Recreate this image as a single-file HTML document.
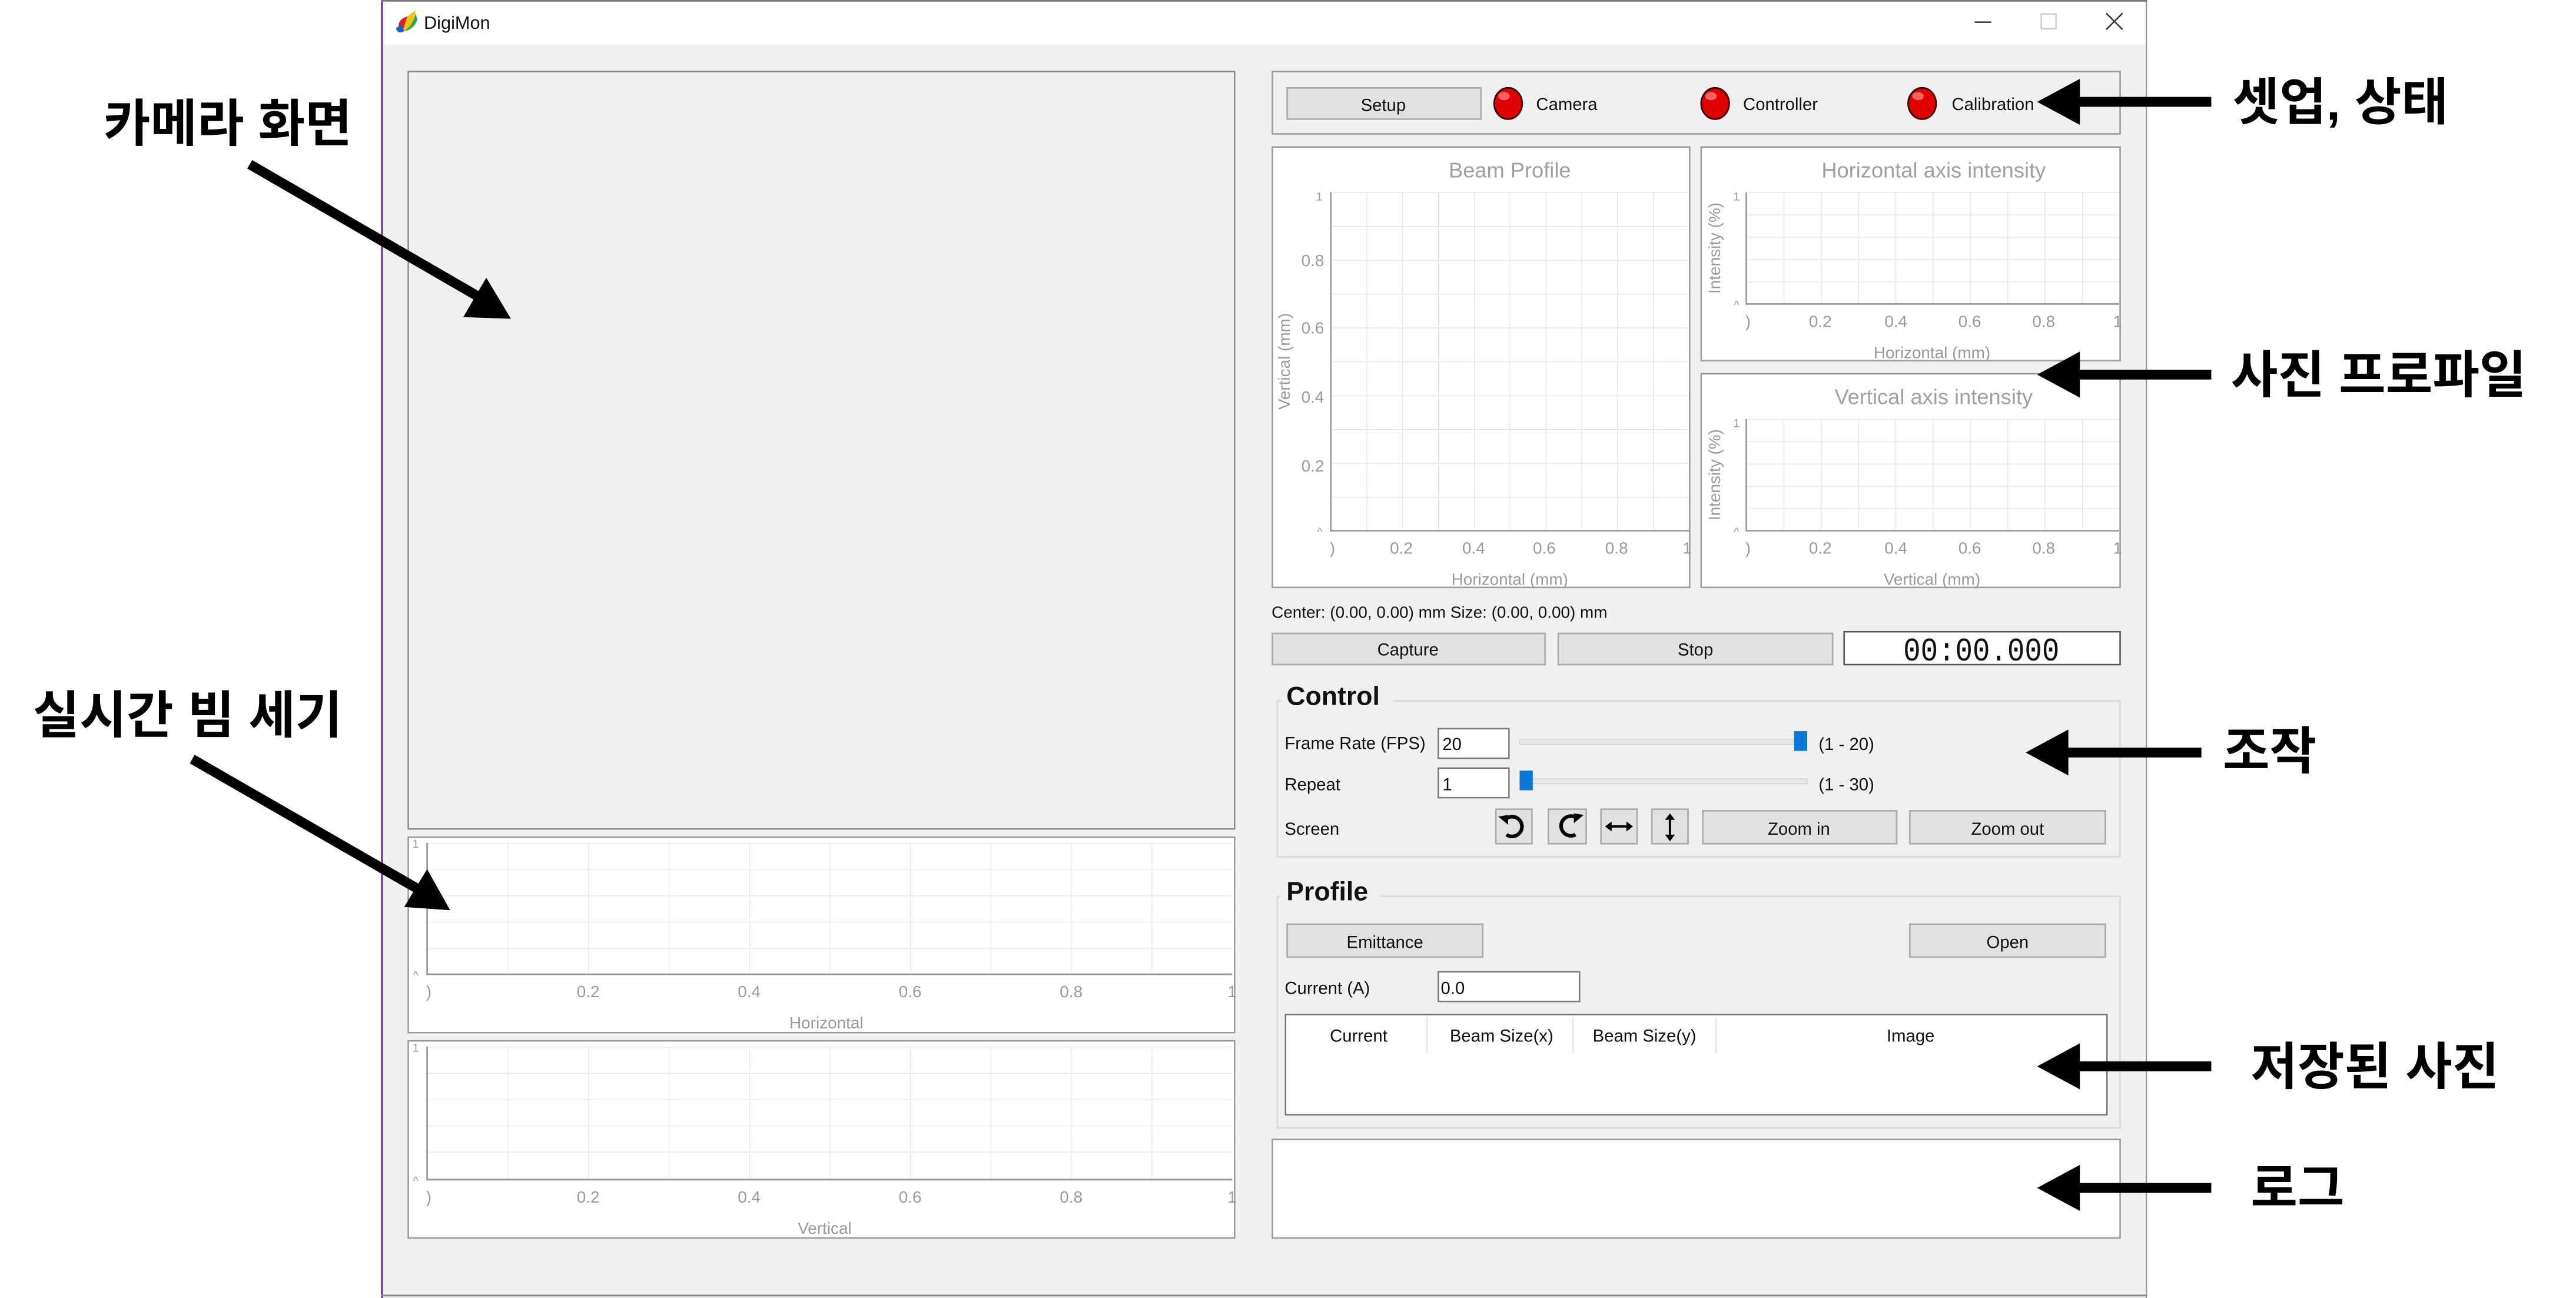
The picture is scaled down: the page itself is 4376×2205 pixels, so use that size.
<!DOCTYPE html>
<html><head><meta charset="utf-8"><style>
html,body{margin:0;padding:0;background:#fff;width:4376px;height:2205px;overflow:hidden}
svg{display:block}
text{font-family:"Liberation Sans","Noto Sans CJK KR",sans-serif}
.k{font-family:"Liberation Sans","Noto Sans CJK KR",sans-serif;font-weight:bold;font-size:31px;fill:#000}
.t{font-size:10.5px;fill:#111}
.g{font-size:10px;fill:#9a9a9a}
.gt{font-size:13px;fill:#a0a0a0}
.btn{fill:#e1e1e1;stroke:#adadad;stroke-width:1}
</style></head><body>
<svg width="4376" height="2205" viewBox="0 0 1568 790" preserveAspectRatio="none" xmlns="http://www.w3.org/2000/svg">
<defs>
<pattern id="gBP" patternUnits="userSpaceOnUse" x="810" y="117" width="21.8" height="20.6"><path d="M0 0V20.6M0 0H21.8" stroke="#e2e2e2" stroke-width="0.8" fill="none"/></pattern>
<pattern id="gHI" patternUnits="userSpaceOnUse" x="1063" y="117" width="22.7" height="13.6"><path d="M0 0V13.6M0 0H22.7" stroke="#e2e2e2" stroke-width="0.8" fill="none"/></pattern>
<pattern id="gVI" patternUnits="userSpaceOnUse" x="1063" y="255" width="22.7" height="13.6"><path d="M0 0V13.6M0 0H22.7" stroke="#e2e2e2" stroke-width="0.8" fill="none"/></pattern>
<pattern id="gL1" patternUnits="userSpaceOnUse" x="260" y="513" width="49" height="16"><path d="M0 0V16M0 0H49" stroke="#e4e4e4" stroke-width="0.8" fill="none"/></pattern>
<pattern id="gL2" patternUnits="userSpaceOnUse" x="260" y="637" width="49" height="16"><path d="M0 0V16M0 0H49" stroke="#e4e4e4" stroke-width="0.8" fill="none"/></pattern>
</defs>
<rect width="1568" height="790" fill="#fff"/>
<!-- window -->
<rect x="232" y="0" width="1075" height="790" fill="#f0f0f0"/>
<rect x="232" y="0" width="1075" height="27" fill="#fff"/>
<line x1="232.5" y1="0" x2="232.5" y2="790" stroke="#6a3a9a" stroke-width="1.2"/>
<line x1="1306.5" y1="0" x2="1306.5" y2="790" stroke="#999" stroke-width="0.8"/>
<line x1="232" y1="0.5" x2="1307" y2="0.5" stroke="#777" stroke-width="1"/>
<line x1="232" y1="788.5" x2="1307" y2="788.5" stroke="#888" stroke-width="1"/>
<!-- logo -->
<path d="M243 19 Q241 12 248 10 L245 19 Z" fill="#e02020"/>
<path d="M245 19 L248 10 Q252 7 253 6 Q252 14 247 19 Z" fill="#f4c20d"/>
<path d="M241 17 Q242 21 246 19 L245 15 Z" fill="#1a5fd0"/>
<path d="M246 19 Q251 16 253 8 L254 12 Q252 18 246 19Z" fill="#2aa84a"/>
<text x="258" y="17.5" style="font-size:11px;fill:#111">DigiMon</text>
<line x1="1202" y1="13.5" x2="1212" y2="13.5" stroke="#333" stroke-width="0.9"/>
<rect x="1242.5" y="8.5" width="9" height="9" fill="none" stroke="#ccc" stroke-width="0.9"/>
<path d="M1282 8L1292 18M1292 8L1282 18" stroke="#333" stroke-width="0.9"/>
<!-- camera frame -->
<rect x="248.5" y="43.5" width="503" height="461" fill="#f0f0f0" stroke="#8a8a8a" stroke-width="0.9"/>
<!-- left charts -->
<rect x="248.5" y="509.5" width="503" height="119" fill="#fff" stroke="#999" stroke-width="0.9"/>
<rect x="260" y="513" width="490" height="80" fill="url(#gL1)"/>
<path d="M260 513V593H750" stroke="#999" stroke-width="1" fill="none"/>
<g class="g" text-anchor="middle"><text x="358" y="607">0.2</text><text x="456" y="607">0.4</text><text x="554" y="607">0.6</text><text x="652" y="607">0.8</text><text x="261" y="607">)</text><text x="750" y="607">1</text><text x="503" y="626">Horizontal</text><text x="253" y="516" style="font-size:7px">1</text><text x="253" y="596" style="font-size:7px">^</text></g>
<rect x="248.5" y="633.5" width="503" height="120" fill="#fff" stroke="#999" stroke-width="0.9"/>
<rect x="260" y="637" width="490" height="81" fill="url(#gL2)"/>
<path d="M260 637V718H750" stroke="#999" stroke-width="1" fill="none"/>
<g class="g" text-anchor="middle"><text x="358" y="732">0.2</text><text x="456" y="732">0.4</text><text x="554" y="732">0.6</text><text x="652" y="732">0.8</text><text x="261" y="732">)</text><text x="750" y="732">1</text><text x="502" y="751">Vertical</text><text x="253" y="640" style="font-size:7px">1</text><text x="253" y="721" style="font-size:7px">^</text></g>
<!-- status box -->
<rect x="774.5" y="43.5" width="516" height="38" fill="#f0f0f0" stroke="#999" stroke-width="0.9"/>
<rect x="783.5" y="53.5" width="118" height="19" class="btn"/>
<text x="842" y="67.5" class="t" text-anchor="middle">Setup</text>
<g><ellipse cx="918" cy="63" rx="8.5" ry="9.5" fill="#e00000" stroke="#300" stroke-width="1"/><ellipse cx="915.5" cy="58.5" rx="3.5" ry="2.5" fill="#ff8a8a" opacity=".7"/></g>
<g><ellipse cx="1044" cy="63" rx="8.5" ry="9.5" fill="#e00000" stroke="#300" stroke-width="1"/><ellipse cx="1041.5" cy="58.5" rx="3.5" ry="2.5" fill="#ff8a8a" opacity=".7"/></g>
<g><ellipse cx="1170" cy="63" rx="8.5" ry="9.5" fill="#e00000" stroke="#300" stroke-width="1"/><ellipse cx="1167.5" cy="58.5" rx="3.5" ry="2.5" fill="#ff8a8a" opacity=".7"/></g>
<text x="935" y="67" class="t">Camera</text>
<text x="1061" y="67" class="t">Controller</text>
<text x="1188" y="67" class="t">Calibration</text>
<!-- beam profile -->
<rect x="774.5" y="89.5" width="254" height="268" fill="#fff" stroke="#999" stroke-width="0.9"/>
<text x="919" y="108" class="gt" text-anchor="middle">Beam Profile</text>
<rect x="810" y="117" width="218" height="206" fill="url(#gBP)"/>
<path d="M810 117V323H1028" stroke="#999" stroke-width="1" fill="none"/>
<g class="g" text-anchor="middle"><text x="853" y="337">0.2</text><text x="897" y="337">0.4</text><text x="940" y="337">0.6</text><text x="984" y="337">0.8</text><text x="811" y="337">)</text><text x="1027" y="337">1</text><text x="919" y="356">Horizontal (mm)</text></g>
<g class="g" text-anchor="end"><text x="806" y="162">0.8</text><text x="806" y="203">0.6</text><text x="806" y="245">0.4</text><text x="806" y="287">0.2</text><text x="805" y="326" style="font-size:7px">^</text><text x="805" y="122" style="font-size:7px">1</text></g>
<text transform="translate(785,220) rotate(-90)" class="g" text-anchor="middle">Vertical (mm)</text>
<!-- horiz intensity -->
<rect x="1035.5" y="89.5" width="255" height="130" fill="#fff" stroke="#999" stroke-width="0.9"/>
<text x="1177" y="108" class="gt" text-anchor="middle">Horizontal axis intensity</text>
<rect x="1063" y="117" width="227" height="68" fill="url(#gHI)"/>
<path d="M1063 117V185H1290" stroke="#999" stroke-width="1" fill="none"/>
<g class="g" text-anchor="middle"><text x="1108" y="199">0.2</text><text x="1154" y="199">0.4</text><text x="1199" y="199">0.6</text><text x="1244" y="199">0.8</text><text x="1064" y="199">)</text><text x="1289" y="199">1</text><text x="1176" y="218">Horizontal (mm)</text><text x="1057" y="122" style="font-size:7px">1</text><text x="1057" y="188" style="font-size:7px">^</text></g>
<text transform="translate(1047,151) rotate(-90)" class="g" text-anchor="middle">Intensity (%)</text>
<!-- vert intensity -->
<rect x="1035.5" y="227.5" width="255" height="130" fill="#fff" stroke="#999" stroke-width="0.9"/>
<text x="1177" y="246" class="gt" text-anchor="middle">Vertical axis intensity</text>
<rect x="1063" y="255" width="227" height="68" fill="url(#gVI)"/>
<path d="M1063 255V323H1290" stroke="#999" stroke-width="1" fill="none"/>
<g class="g" text-anchor="middle"><text x="1108" y="337">0.2</text><text x="1154" y="337">0.4</text><text x="1199" y="337">0.6</text><text x="1244" y="337">0.8</text><text x="1064" y="337">)</text><text x="1289" y="337">1</text><text x="1176" y="356">Vertical (mm)</text><text x="1057" y="260" style="font-size:7px">1</text><text x="1057" y="326" style="font-size:7px">^</text></g>
<text transform="translate(1047,289) rotate(-90)" class="g" text-anchor="middle">Intensity (%)</text>
<text x="774" y="376" style="font-size:10px;fill:#111">Center: (0.00, 0.00) mm Size: (0.00, 0.00) mm</text>
<!-- capture row -->
<rect x="774.5" y="385.5" width="166" height="19" class="btn"/><text x="857" y="399" class="t" text-anchor="middle">Capture</text>
<rect x="948.5" y="385.5" width="167" height="19" class="btn"/><text x="1032" y="399" class="t" text-anchor="middle">Stop</text>
<rect x="1122.5" y="384.5" width="168" height="20" fill="#fff" stroke="#555" stroke-width="0.9"/>
<text x="1206" y="402" text-anchor="middle" style="font-family:'Liberation Mono',monospace;font-size:20px;fill:#111" textLength="95" lengthAdjust="spacingAndGlyphs">00:00.000</text>
<!-- Control -->
<path d="M777.5 426.5H780M848 426.5H1290.5V521.5H777.5V426.5" fill="none" stroke="#dcdcdc" stroke-width="1"/>
<text x="783" y="429" style="font-size:16px;font-weight:bold;fill:#111">Control</text>
<text x="782" y="456" class="t">Frame Rate (FPS)</text>
<rect x="875.5" y="443.5" width="43" height="18" fill="#fff" stroke="#7a7a7a" stroke-width="0.9"/><text x="878" y="456.5" class="t">20</text>
<rect x="925" y="450" width="175" height="3" fill="#e6e6e6" stroke="#d0d0d0" stroke-width="0.5"/>
<rect x="1092" y="445" width="8" height="12" fill="#0a78d7"/>
<text x="1107" y="456.5" class="t">(1 - 20)</text>
<text x="782" y="481" class="t">Repeat</text>
<rect x="875.5" y="467.5" width="43" height="18" fill="#fff" stroke="#7a7a7a" stroke-width="0.9"/><text x="878" y="481" class="t">1</text>
<rect x="925" y="474" width="175" height="3" fill="#e6e6e6" stroke="#d0d0d0" stroke-width="0.5"/>
<rect x="925" y="469" width="8" height="12" fill="#0a78d7"/>
<text x="1107" y="481" class="t">(1 - 30)</text>
<text x="782" y="508" class="t">Screen</text>
<rect x="910.5" y="492.5" width="22" height="21" class="btn"/>
<rect x="942.5" y="492.5" width="23" height="21" class="btn"/>
<rect x="974.5" y="492.5" width="22" height="21" class="btn"/>
<rect x="1005.5" y="492.5" width="22" height="21" class="btn"/>
<path d="M916 499A6 6 0 1 1 917 508" fill="none" stroke="#000" stroke-width="2.2"/><path d="M912 497L918 496L918 502Z" fill="#000"/>
<path d="M960 498A6 6 0 1 0 959 508" fill="none" stroke="#000" stroke-width="2.2"/><path d="M964 496L958 495L958 501Z" fill="#000"/>
<path d="M979 503H992" stroke="#000" stroke-width="1.4"/><path d="M977 503L981 500V506Z M994 503L990 500V506Z" fill="#000"/>
<path d="M1016.5 497V510" stroke="#000" stroke-width="1.4"/><path d="M1016.5 495L1013.5 499H1019.5Z M1016.5 512L1013.5 508H1019.5Z" fill="#000"/>
<rect x="1036.5" y="493.5" width="118" height="20" class="btn"/><text x="1095" y="508" class="t" text-anchor="middle">Zoom in</text>
<rect x="1162.5" y="493.5" width="119" height="20" class="btn"/><text x="1222" y="508" class="t" text-anchor="middle">Zoom out</text>
<!-- Profile -->
<path d="M777.5 545.5H780M840 545.5H1290.5V686.5H777.5V545.5" fill="none" stroke="#dcdcdc" stroke-width="1"/>
<text x="783" y="548" style="font-size:16px;font-weight:bold;fill:#111">Profile</text>
<rect x="783.5" y="562.5" width="119" height="20" class="btn"/><text x="843" y="577" class="t" text-anchor="middle">Emittance</text>
<rect x="1162.5" y="562.5" width="119" height="20" class="btn"/><text x="1222" y="577" class="t" text-anchor="middle">Open</text>
<text x="782" y="605" class="t">Current (A)</text>
<rect x="875.5" y="591.5" width="86" height="18" fill="#fff" stroke="#7a7a7a" stroke-width="0.9"/><text x="877" y="605" class="t">0.0</text>
<rect x="782.5" y="617.5" width="500" height="61" fill="#fff" stroke="#777" stroke-width="0.9"/>
<path d="M868.5 619V641M957.5 619V641M1044.5 619V641" stroke="#e8e8e8" stroke-width="1"/>
<g class="t" text-anchor="middle"><text x="827" y="634">Current</text><text x="914" y="634">Beam Size(x)</text><text x="1001" y="634">Beam Size(y)</text><text x="1163" y="634">Image</text></g>
<!-- log -->
<rect x="774.5" y="693.5" width="516" height="60" fill="#fff" stroke="#999" stroke-width="0.9"/>
<!-- annotations -->
<text x="63" y="86" class="k">카메라 화면</text>
<text x="20" y="446" class="k">실시간 빔 세기</text>
<text x="1359" y="73" class="k">셋업, 상태</text>
<text x="1358" y="239" class="k">사진 프로파일</text>
<text x="1353" y="468" class="k">조작</text>
<text x="1370" y="660" class="k">저장된 사진</text>
<text x="1370" y="734" class="k">로그</text>
<g stroke="#000" stroke-width="6" fill="#000">
<line x1="152" y1="100" x2="292" y2="181"/>
<line x1="117" y1="462" x2="256" y2="542"/>
<line x1="1346" y1="62" x2="1262" y2="62"/>
<line x1="1346" y1="228" x2="1262" y2="228"/>
<line x1="1340" y1="458" x2="1256" y2="458"/>
<line x1="1346" y1="649" x2="1262" y2="649"/>
<line x1="1346" y1="723" x2="1262" y2="723"/>
</g>
<g fill="#000">
<path d="M311 194L282 193L296 169Z"/>
<path d="M274 554L246 552L260 529Z"/>
<path d="M1240 62L1266 48V76Z"/>
<path d="M1240 228L1266 214V242Z"/>
<path d="M1233 458L1259 444V472Z"/>
<path d="M1240 649L1266 635V663Z"/>
<path d="M1240 723L1266 709V737Z"/>
</g>
</svg>
</body></html>
